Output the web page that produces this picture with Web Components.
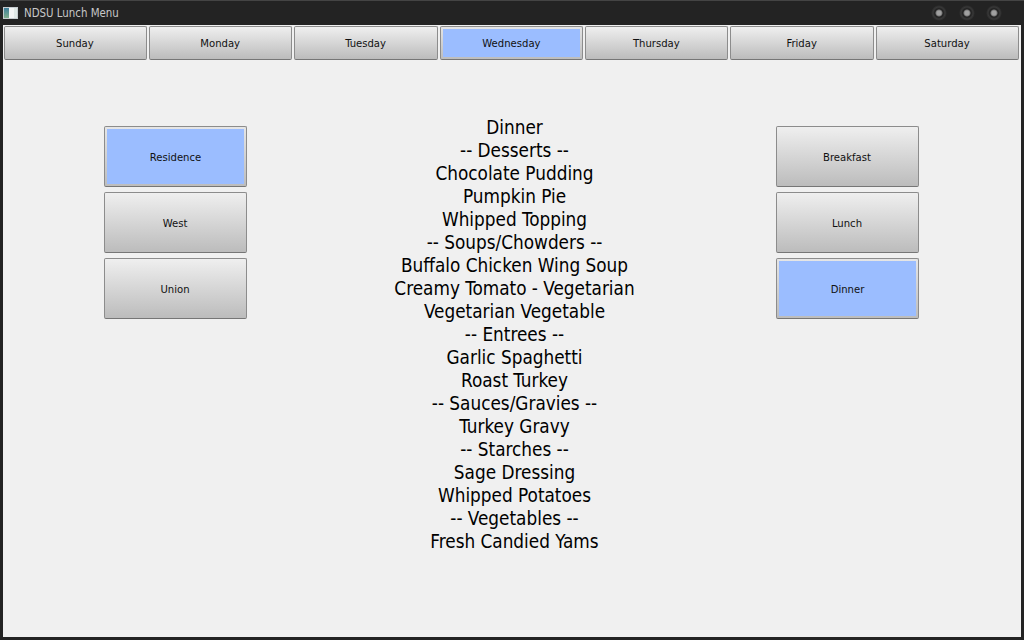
<!DOCTYPE html>
<html>
<head>
<meta charset="utf-8">
<title>NDSU Lunch Menu</title>
<style>
    html, body { margin: 0; padding: 0; height: 100%; background: #232323; overflow: hidden; }
    body { font-family: "DejaVu Sans Condensed", "DejaVu Sans", sans-serif; }
</style>
</head>
<body>
<app-window title="NDSU Lunch Menu">
    <day-bar>
        <fx-button>Sunday</fx-button>
        <fx-button>Monday</fx-button>
        <fx-button>Tuesday</fx-button>
        <fx-button selected>Wednesday</fx-button>
        <fx-button>Thursday</fx-button>
        <fx-button>Friday</fx-button>
        <fx-button>Saturday</fx-button>
    </day-bar>
    <menu-view>
        <button-column slot="left">
            <fx-button selected>Residence</fx-button>
            <fx-button>West</fx-button>
            <fx-button>Union</fx-button>
        </button-column>
        <div>Dinner</div>
        <div>-- Desserts --</div>
        <div>Chocolate Pudding</div>
        <div>Pumpkin Pie</div>
        <div>Whipped Topping</div>
        <div>-- Soups/Chowders --</div>
        <div>Buffalo Chicken Wing Soup</div>
        <div>Creamy Tomato - Vegetarian</div>
        <div>Vegetarian Vegetable</div>
        <div>-- Entrees --</div>
        <div>Garlic Spaghetti</div>
        <div>Roast Turkey</div>
        <div>-- Sauces/Gravies --</div>
        <div>Turkey Gravy</div>
        <div>-- Starches --</div>
        <div>Sage Dressing</div>
        <div>Whipped Potatoes</div>
        <div>-- Vegetables --</div>
        <div>Fresh Candied Yams</div>
        <button-column slot="right">
            <fx-button>Breakfast</fx-button>
            <fx-button>Lunch</fx-button>
            <fx-button selected>Dinner</fx-button>
        </button-column>
    </menu-view>
</app-window>
<script>
class AppWindow extends HTMLElement {
    connectedCallback() {
        this.attachShadow({ mode: 'open' });
        this.shadowRoot.innerHTML = `
            <style>
                :host {
                    display: flex;
                    flex-direction: column;
                    width: 1024px;
                    height: 640px;
                    box-sizing: border-box;
                    padding: 0 3px 3px 3px;
                    background: #232323;
                    border-top: 1px solid #444;
                }
                .title {
                    display: flex;
                    align-items: center;
                    height: 24px;
                    flex: none;
                    color: #c8c8c8;
                    font-size: 11.4px;
                }
                .title svg { margin-right: 6px; flex: none; }
                .title span { flex: 1; }
                .knob {
                    width: 16px;
                    height: 16px;
                    margin-left: 11.5px;
                    border-radius: 50%;
                    background: radial-gradient(circle, #a0a0a0 0 2px, #777 3px, #1e1e1e 4px, #383838 6px, #232323 8px);
                }
                .knob:last-child { margin-right: 19px; }
                .client {
                    flex: 1;
                    display: flex;
                    flex-direction: column;
                    min-height: 0;
                    background: #f0f0f0;
                }
            </style>
            <div class="title">
                <svg width="15" height="12" viewBox="0 0 15 12">
                    <defs>
                        <linearGradient id="pane" x1="0" y1="0" x2="0" y2="1">
                            <stop offset="0" stop-color="#3f7f9a"/>
                            <stop offset="1" stop-color="#7fae8c"/>
                        </linearGradient>
                    </defs>
                    <rect width="15" height="12" fill="#c6ccd0"/>
                    <rect x="1" y="1" width="5" height="10" fill="url(#pane)"/>
                    <rect x="6" y="1" width="5" height="10" fill="#f2f4f4"/>
                    <rect x="11" y="1" width="3" height="10" fill="#dfe8e6"/>
                </svg>
                <span>${this.getAttribute('title')}</span>
                <i class="knob"></i><i class="knob"></i><i class="knob"></i>
            </div>
            <div class="client"><slot></slot></div>
        `;
    }
}

class DayBar extends HTMLElement {
    connectedCallback() {
        this.attachShadow({ mode: 'open' });
        this.shadowRoot.innerHTML = `
            <style>
                :host {
                    display: grid;
                    grid-template-columns: repeat(7, 143.37px);
                    gap: 2px;
                    height: 34px;
                    padding: 1px 0 0 0.7px;
                    flex: none;
                }
            </style>
            <slot></slot>
        `;
    }
}

class MenuView extends HTMLElement {
    connectedCallback() {
        this.attachShadow({ mode: 'open' });
        this.shadowRoot.innerHTML = `
            <style>
                :host {
                    display: grid;
                    grid-template-columns: 143px 1fr 143px;
                    align-items: start;
                    padding: 66px 102px 0 101px;
                }
                .items {
                    padding: 0 0 0 6px;
                    margin-top: -10px;
                    text-align: center;
                    font-size: 18.8px;
                    line-height: 23px;
                    color: #000;
                }
            </style>
            <slot name="left"></slot>
            <div class="items"><slot></slot></div>
            <slot name="right"></slot>
        `;
    }
}

class ButtonColumn extends HTMLElement {
    connectedCallback() {
        this.attachShadow({ mode: 'open' });
        this.shadowRoot.innerHTML = `
            <style>
                :host {
                    display: grid;
                    grid-auto-rows: 61px;
                    gap: 5px;
                    --label-shift: 2px;
                }
            </style>
            <slot></slot>
        `;
    }
}

class FxButton extends HTMLElement {
    connectedCallback() {
        this.attachShadow({ mode: 'open' });
        this.shadowRoot.innerHTML = `
            <style>
                :host {
                    display: flex;
                    align-items: center;
                    justify-content: center;
                    box-sizing: border-box;
                    padding: var(--label-shift, 0px) 1px 0 0;
                    border: 1px solid #8c8c8c;
                    border-bottom-color: #767676;
                    border-radius: 2px;
                    background: linear-gradient(#efefef, #bcbcbc);
                    color: #111;
                    font-size: 11.2px;
                }
                :host([selected]) {
                    padding: 2px;
                    background:
                        linear-gradient(#9bbdff, #9bbdff) content-box,
                        linear-gradient(#e6e6e6, #bcbcbc) border-box;
                }
                :host([selected]) span { position: relative; top: calc(var(--label-shift, 0px) / 2); }
            </style>
            <span><slot></slot></span>
        `;
    }
}

customElements.define('app-window', AppWindow);
customElements.define('day-bar', DayBar);
customElements.define('menu-view', MenuView);
customElements.define('button-column', ButtonColumn);
customElements.define('fx-button', FxButton);
</script>
</body>
</html>
